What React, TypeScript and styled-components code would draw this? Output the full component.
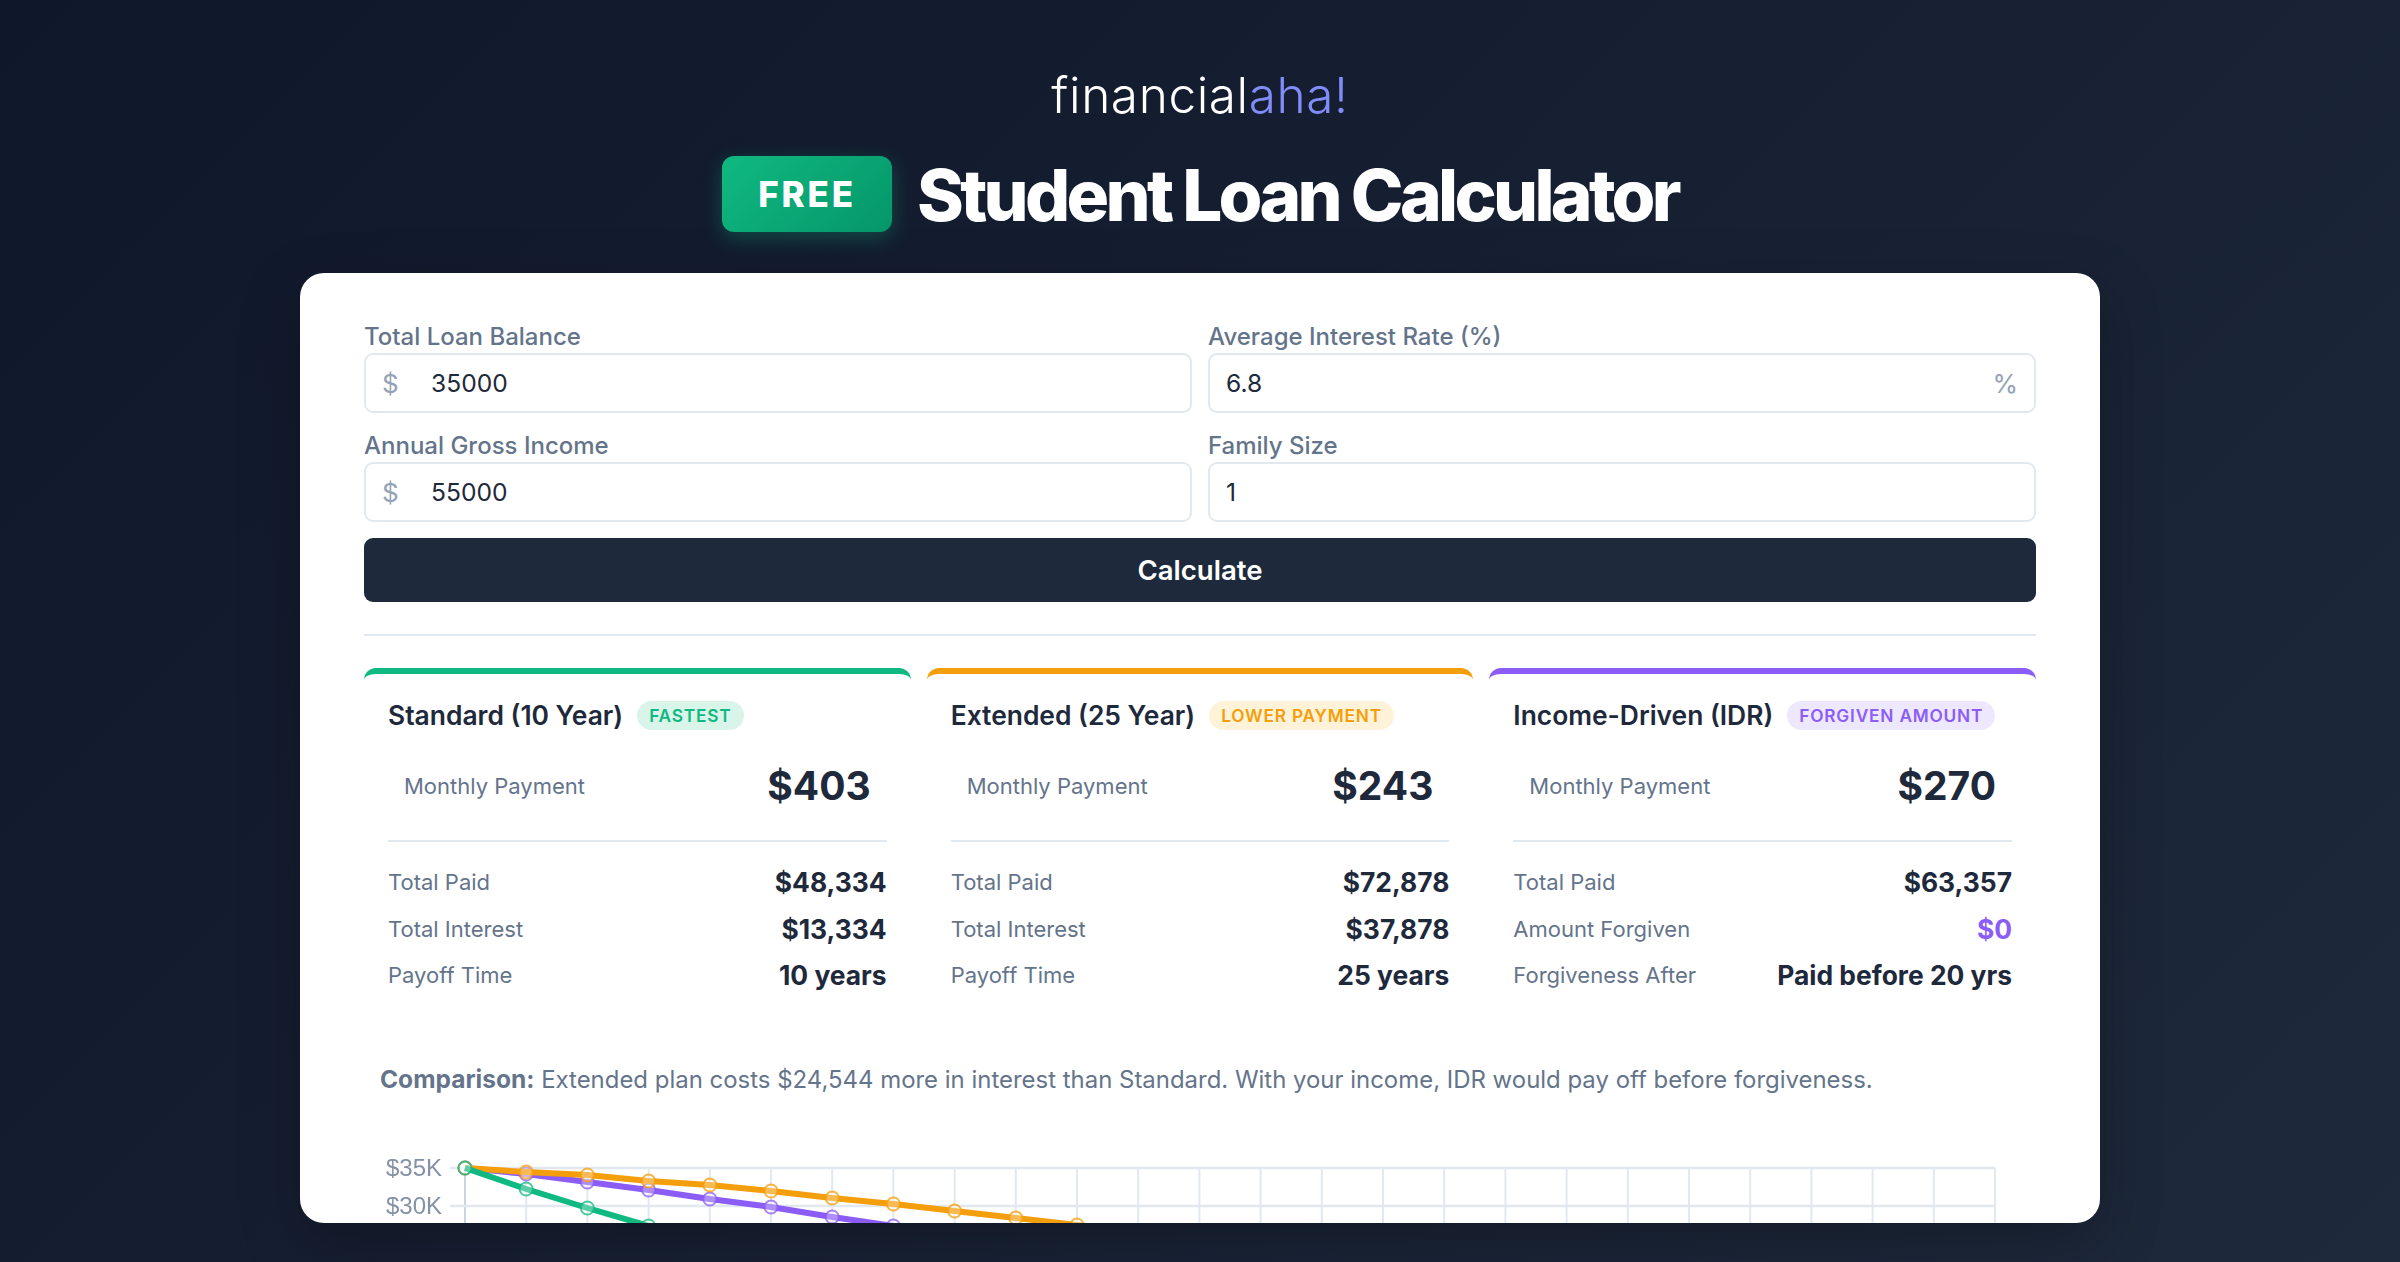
import React from "react";
import styled, { createGlobalStyle } from "styled-components";

const Global = createGlobalStyle`
  html, body { margin: 0; padding: 0; height: 100%; }
  body { font-family: Inter, "Liberation Sans", sans-serif; background: #0f172a; }
  * { box-sizing: border-box; }
`;

const Page = styled.div`
  height: 1262px;
  overflow: hidden;
  display: flex;
  flex-direction: column;
  align-items: center;
  padding: 65px 300px 39px;
  background: linear-gradient(135deg, #0f172a 0%, #1e293b 100%);
`;

const Logo = styled.div`
  height: 60px;
  font-family: Inter, sans-serif;
  font-weight: 300;
  font-size: 49.5px;
  line-height: 60px;
  letter-spacing: 0.6px;
  color: #ffffff;
  span { color: #818cf8; }
`;

const Header = styled.div`
  display: flex;
  align-items: center;
  gap: 25px;
  margin-top: 31px;
  height: 76px;
`;

const FreeBadge = styled.div`
  width: 170px;
  height: 76px;
  display: flex;
  align-items: center;
  justify-content: center;
  border-radius: 12px;
  background: linear-gradient(135deg, #10b981 0%, #059669 100%);
  box-shadow: 0 6px 20px rgba(16, 185, 129, 0.3);
  color: #fff;
  font-weight: 800;
  font-size: 35px;
  letter-spacing: 2.8px;
`;

const Title = styled.h1`
  margin: 2px 0 0;
  color: #fff;
  font-size: 71px;
  font-weight: 800;
  line-height: 76px;
  letter-spacing: -3.7px;
`;

const Card = styled.main`
  flex: 1;
  width: 1800px;
  margin-top: 41px;
  min-height: 0;
  overflow: hidden;
  border-radius: 24px;
  background: #fff;
  padding: 47px 64px 0;
  box-shadow: 0 20px 60px rgba(0, 0, 0, 0.25);
`;

const FormGrid = styled.div`
  display: grid;
  grid-template-columns: 1fr 1fr;
  gap: 16px;
`;

const Field = styled.label`
  display: block;
`;

const FieldLabel = styled.div`
  height: 33px;
  line-height: 33px;
  font-size: 24px;
  font-weight: 500;
  color: #64748b;
`;

const InputBox = styled.div`
  height: 60px;
  display: flex;
  align-items: center;
  padding: 0 16px;
  border: 2px solid #e2e8f0;
  border-radius: 9px;
  background: #fff;
`;

const Affix = styled.span<{ $wide?: boolean }>`
  flex: none;
  width: ${(p) => (p.$wide ? "49px" : "auto")};
  font-size: 26px;
  color: #94a3b8;
`;

const Input = styled.input`
  flex: 1;
  min-width: 0;
  border: 0;
  outline: 0;
  padding: 0;
  background: transparent;
  font-family: Inter, sans-serif;
  font-size: 24.6px;
  color: #1e293b;
`;

const CalcButton = styled.button`
  display: block;
  width: 100%;
  height: 64px;
  margin-top: 16px;
  border: 0;
  border-radius: 9px;
  background: #1e293b;
  color: #fff;
  font-family: Inter, sans-serif;
  font-size: 27.6px;
  font-weight: 600;
`;

const Rule = styled.hr`
  height: 2px;
  margin: 32px 0;
  border: 0;
  background: #e2e8f0;
`;

const Plans = styled.div`
  display: grid;
  grid-template-columns: repeat(3, 1fr);
  gap: 16px;
`;

const Plan = styled.section<{ $color: string }>`
  height: 358px;
  padding: 26px 24px 0;
  border-top: 6px solid ${(p) => p.$color};
  border-radius: 12px 12px 0 0;
`;

const PlanHead = styled.div`
  height: 30px;
  display: flex;
  align-items: center;
  gap: 14px;
`;

const PlanName = styled.h3`
  margin: 0;
  font-size: 26.4px;
  font-weight: 600;
  white-space: nowrap;
  color: #1e293b;
`;

const Tag = styled.span<{ $color: string; $bg: string }>`
  height: 29px;
  padding: 0 12px;
  display: flex;
  align-items: center;
  border-radius: 15px;
  font-size: 17.3px;
  font-weight: 600;
  letter-spacing: 0.8px;
  white-space: nowrap;
  color: ${(p) => p.$color};
  background: ${(p) => p.$bg};
`;

const Monthly = styled.div`
  height: 97px;
  margin-top: 7px;
  padding: 0 16px;
  display: flex;
  align-items: center;
  justify-content: space-between;
`;

const MonthlyLabel = styled.span`
  font-size: 22px;
  color: #64748b;
`;

const MonthlyValue = styled.span`
  font-size: 39px;
  font-weight: 700;
  color: #1e293b;
`;

const PlanRule = styled.div`
  height: 2px;
  margin-top: 6px;
  background: #e2e8f0;
`;

const Stats = styled.div`
  margin-top: 17px;
  display: flex;
  flex-direction: column;
`;

const Stat = styled.div`
  height: 46.5px;
  display: flex;
  align-items: center;
  justify-content: space-between;
`;

const StatLabel = styled.span`
  font-size: 22px;
  color: #64748b;
`;

const StatValue = styled.span<{ $accent?: string }>`
  font-size: 26.4px;
  font-weight: 700;
  color: ${(p) => p.$accent || "#1e293b"};
`;

const Comparison = styled.p`
  margin: 35px 0 0 16px;
  font-size: 23.95px;
  line-height: 36px;
  color: #64748b;
  white-space: nowrap;
  b { font-weight: 700; font-size: 24.5px; }
`;

const ChartWrap = styled.div`
  margin: 44px -64px 0;
`;

const ChartSvg = styled.svg`
  display: block;
  width: 1800px;
  height: 120px;
  filter: blur(0.6px);
`;

const X0 = 165;
const DX = 61.2;
const Y0 = 26;
const DY = 38;

const orange = [26, 30, 33, 39, 43, 49, 56, 62, 69, 76, 83, 90];
const purple = [26, 32, 40, 48, 57, 65, 75, 84, 94];
const green = [26, 47, 66, 84, 103];

const toPoints = (ys: number[]) => ys.map((y, i) => `${X0 + i * DX},${y}`).join(" ");

const Series = ({ ys, color }: { ys: number[]; color: string }) => (
  <g>
    <polyline points={toPoints(ys)} fill="none" stroke={color} strokeWidth="6" />
    {ys.map((y, i) => (
      <circle
        key={i}
        cx={X0 + i * DX}
        cy={y}
        r="6.5"
        fill="#ffffff"
        fillOpacity="0.3"
        stroke={color}
        strokeOpacity="0.75"
        strokeWidth="2"
      />
    ))}
  </g>
);

const Chart = () => (
  <ChartSvg viewBox="0 0 1800 120">
    {Array.from({ length: 26 }, (_, i) => (
      <line
        key={i}
        x1={X0 + i * DX}
        x2={X0 + i * DX}
        y1={Y0}
        y2={120}
        stroke={i === 0 ? "#cbd5e1" : "#e2e8f0"}
        strokeWidth="2"
      />
    ))}
    {[0, 1, 2].map((i) => (
      <line key={i} x1={150} x2={1695} y1={Y0 + i * DY} y2={Y0 + i * DY} stroke="#e2e8f0" strokeWidth="2.5" />
    ))}
    {["$35K", "$30K"].map((t, i) => (
      <text
        key={t}
        x={142}
        y={Y0 + i * DY + 8}
        textAnchor="end"
        fontFamily="Liberation Sans, sans-serif"
        fontSize="24"
        fill="#8492a6"
      >
        {t}
      </text>
    ))}
    <Series ys={purple} color="#8b5cf6" />
    <Series ys={orange} color="#f59e0b" />
    <Series ys={green} color="#10b981" />
  </ChartSvg>
);

const plans = [
  {
    name: "Standard (10 Year)",
    tag: "FASTEST",
    color: "#10b981",
    bg: "#d9f5ea",
    monthly: "$403",
    stats: [
      ["Total Paid", "$48,334"],
      ["Total Interest", "$13,334"],
      ["Payoff Time", "10 years"],
    ],
  },
  {
    name: "Extended (25 Year)",
    tag: "LOWER PAYMENT",
    color: "#f59e0b",
    bg: "#fef3d8",
    monthly: "$243",
    stats: [
      ["Total Paid", "$72,878"],
      ["Total Interest", "$37,878"],
      ["Payoff Time", "25 years"],
    ],
  },
  {
    name: "Income-Driven (IDR)",
    tag: "FORGIVEN AMOUNT",
    color: "#8b5cf6",
    bg: "#eee8fe",
    monthly: "$270",
    stats: [
      ["Total Paid", "$63,357"],
      ["Amount Forgiven", "$0", "#8b5cf6"],
      ["Forgiveness After", "Paid before 20 yrs"],
    ],
  },
];

export default function App() {
  return (
    <Page>
      <Global />
      <Logo>
        financial<span>aha!</span>
      </Logo>
      <Header>
        <FreeBadge>FREE</FreeBadge>
        <Title>Student Loan Calculator</Title>
      </Header>
      <Card>
        <FormGrid>
          <Field>
            <FieldLabel>Total Loan Balance</FieldLabel>
            <InputBox>
              <Affix $wide>$</Affix>
              <Input defaultValue="35000" />
            </InputBox>
          </Field>
          <Field>
            <FieldLabel>Average Interest Rate (%)</FieldLabel>
            <InputBox>
              <Input defaultValue="6.8" />
              <Affix>%</Affix>
            </InputBox>
          </Field>
          <Field>
            <FieldLabel>Annual Gross Income</FieldLabel>
            <InputBox>
              <Affix $wide>$</Affix>
              <Input defaultValue="55000" />
            </InputBox>
          </Field>
          <Field>
            <FieldLabel>Family Size</FieldLabel>
            <InputBox>
              <Input defaultValue="1" />
            </InputBox>
          </Field>
        </FormGrid>
        <CalcButton>Calculate</CalcButton>
        <Rule />
        <Plans>
          {plans.map((p) => (
            <Plan key={p.name} $color={p.color}>
              <PlanHead>
                <PlanName>{p.name}</PlanName>
                <Tag $color={p.color} $bg={p.bg}>
                  {p.tag}
                </Tag>
              </PlanHead>
              <Monthly>
                <MonthlyLabel>Monthly Payment</MonthlyLabel>
                <MonthlyValue>{p.monthly}</MonthlyValue>
              </Monthly>
              <PlanRule />
              <Stats>
                {p.stats.map(([label, value, accent]) => (
                  <Stat key={label}>
                    <StatLabel>{label}</StatLabel>
                    <StatValue $accent={accent}>{value}</StatValue>
                  </Stat>
                ))}
              </Stats>
            </Plan>
          ))}
        </Plans>
        <Comparison>
          <b>Comparison:</b> Extended plan costs $24,544 more in interest than Standard. With your income, IDR would pay
          off before forgiveness.
        </Comparison>
        <ChartWrap>
          <Chart />
        </ChartWrap>
      </Card>
    </Page>
  );
}
